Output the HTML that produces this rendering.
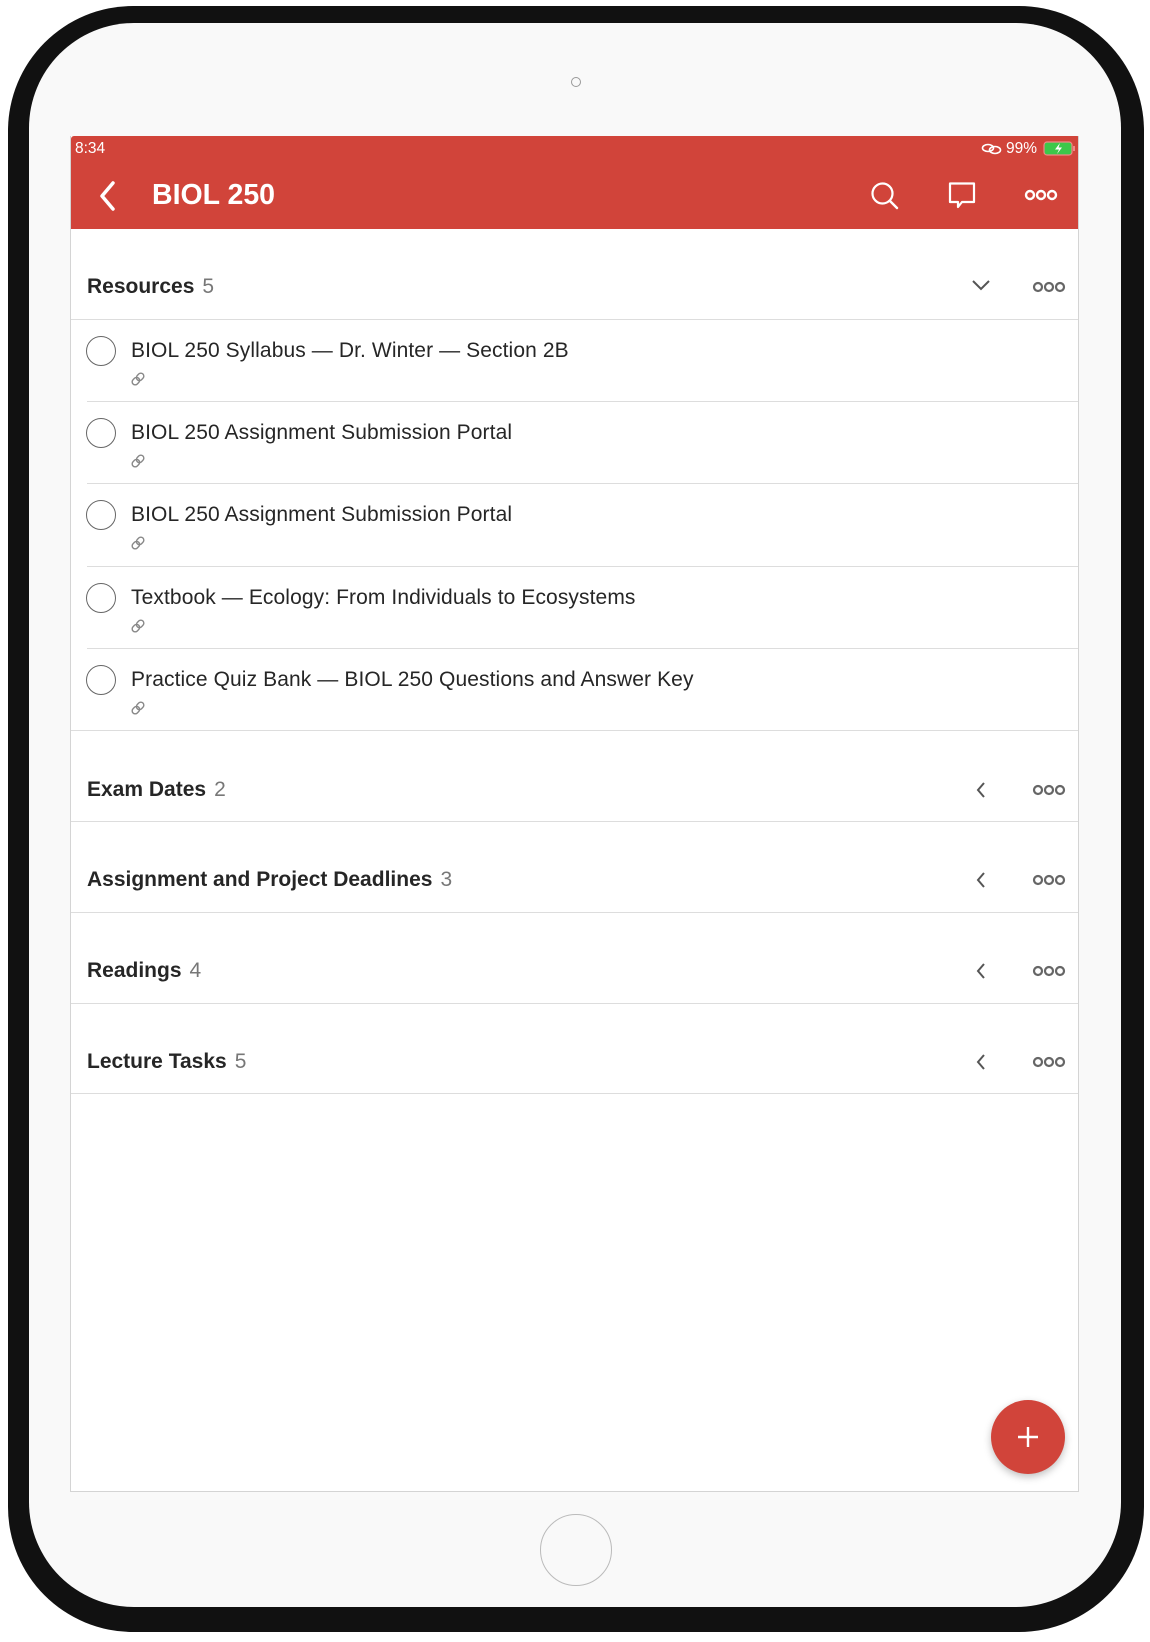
<!DOCTYPE html>
<html><head><meta charset="utf-8"><style>
*{margin:0;padding:0;box-sizing:border-box}
body{width:1150px;height:1642px;background:#fff;position:relative;overflow:hidden;font-family:"Liberation Sans",sans-serif}
.shadow{position:absolute;left:8px;top:6px;width:1136px;height:1626px;background:#111;border-radius:125px}
.dev{position:absolute;left:29px;top:23px;width:1092px;height:1584px;background:#f9f9f9;border-radius:105px}
.cam{position:absolute;left:571px;top:77px;width:10px;height:10px;border:1px solid #999;border-radius:50%}
.home{position:absolute;left:540px;top:1514px;width:72px;height:72px;border:1.5px solid #bbb;border-radius:50%}
.scr{position:absolute;left:70px;top:136px;width:1009px;height:1356px;background:#fff;border:1px solid #d4d4d4;border-top:none;overflow:hidden}
.hdr{position:absolute;left:0;top:0;width:1009px;height:93px;background:#d1443a;border-radius:3px 3px 0 0}
.t{position:absolute;white-space:nowrap}
.sec{position:absolute;left:16px;font-size:21px;font-weight:bold;color:#262626}
.sec span{font-weight:normal;color:#777;margin-left:8px}
.line{position:absolute;left:0;width:1009px;height:1px;background:#ddd}
.item{position:absolute;left:60px;font-size:21px;color:#262626;letter-spacing:0.1px}
.circ{position:absolute;left:15px;width:30px;height:30px;border:1.5px solid #666;border-radius:50%}
.fab{position:absolute;left:920px;top:1264px;width:74px;height:74px;border-radius:50%;background:#d1443a;box-shadow:0 3px 8px rgba(0,0,0,.25)}
</style></head><body>
<div class="shadow"></div>
<div class="dev"></div>
<div class="cam"></div>
<div class="home"></div>
<div class="scr">
 <div class="hdr">
  <div class="t" style="left:4px;top:4px;color:#fff;font-size:15.5px">8:34</div>
  <div class="t" style="left:935px;top:4px;color:#fff;font-size:15.5px">99%</div>
  <svg style="position:absolute;left:910px;top:6px" width="22" height="14" viewBox="0 0 22 14"><g fill="none" stroke="#fff" stroke-width="1.6"><ellipse cx="7" cy="6" rx="5.5" ry="3.5"/><ellipse cx="14" cy="8" rx="5.5" ry="3.5"/></g></svg>
  <svg style="position:absolute;left:972px;top:5px" width="34" height="16" viewBox="0 0 34 16"><rect x="1" y="1" width="28" height="13" rx="3" fill="#3cc84a" stroke="#e88" stroke-width="1.2"/><rect x="30" y="5" width="2" height="5" fill="#e88"/><path d="M17 2 L12 8.5 H16 L14 13 L19 6.5 H15.5Z" fill="#fff"/></svg>
  <svg style="position:absolute;left:26px;top:44px" width="22" height="32" viewBox="0 0 22 32"><path d="M16 3 L5 16 L16 29" fill="none" stroke="#fff" stroke-width="3.5" stroke-linecap="round" stroke-linejoin="round"/></svg>
  <div class="t" style="left:81px;top:43px;color:#fff;font-size:28.5px;font-weight:bold">BIOL 250</div>
  <svg style="position:absolute;left:799px;top:45px" width="30" height="30" viewBox="0 0 30 30"><circle cx="12.5" cy="12.5" r="10" fill="none" stroke="#fff" stroke-width="2.2"/><path d="M20 20 L27 27" stroke="#fff" stroke-width="2.4" stroke-linecap="round"/></svg>
  <svg style="position:absolute;left:876px;top:45px" width="30" height="30" viewBox="0 0 30 30"><path d="M3 2.5 H27 V21 H15 L11 26 V21 H3Z" fill="none" stroke="#fff" stroke-width="2.2" stroke-linejoin="round"/></svg>
  <svg style="position:absolute;left:953px;top:52px" width="34" height="14" viewBox="0 0 34 14"><g fill="none" stroke="#fff" stroke-width="2.4"><circle cx="6" cy="7" r="4"/><circle cx="17" cy="7" r="4"/><circle cx="28" cy="7" r="4"/></g></svg>
 </div>

 <div class="sec" style="top:139px">Resources<span>5</span></div>
 <svg style="position:absolute;left:900px;top:142px" width="20" height="14" viewBox="0 0 20 14"><path d="M2 3 L10 11 L18 3" fill="none" stroke="#555" stroke-width="2"/></svg>
 <div class="line" style="top:183px"></div>

 <div class="circ" style="top:200px"></div><div class="item t" style="top:203px">BIOL 250 Syllabus — Dr. Winter — Section 2B</div>
 <div class="line" style="top:265px;left:16px"></div>
 <div class="circ" style="top:282px"></div><div class="item t" style="top:285px">BIOL 250 Assignment Submission Portal</div>
 <div class="line" style="top:347px;left:16px"></div>
 <div class="circ" style="top:364px"></div><div class="item t" style="top:367px">BIOL 250 Assignment Submission Portal</div>
 <div class="line" style="top:430px;left:16px"></div>
 <div class="circ" style="top:447px"></div><div class="item t" style="top:450px">Textbook — Ecology: From Individuals to Ecosystems</div>
 <div class="line" style="top:512px;left:16px"></div>
 <div class="circ" style="top:529px"></div><div class="item t" style="top:532px">Practice Quiz Bank — BIOL 250 Questions and Answer Key</div>
 <div class="line" style="top:594px"></div>

 <div class="sec" style="top:642px">Exam Dates<span>2</span></div>
 <div class="line" style="top:685px"></div>
 <div class="sec" style="top:732px">Assignment and Project Deadlines<span>3</span></div>
 <div class="line" style="top:776px"></div>
 <div class="sec" style="top:823px">Readings<span>4</span></div>
 <div class="line" style="top:867px"></div>
 <div class="sec" style="top:914px">Lecture Tasks<span>5</span></div>
 <div class="line" style="top:957px"></div>

 <div class="fab"><svg style="position:absolute;left:25px;top:25px" width="24" height="24" viewBox="0 0 24 24"><path d="M12 2 V22 M2 12 H22" stroke="#fff" stroke-width="2.4"/></svg></div>
</div>
<svg width="1150" height="1642" style="position:absolute;left:0;top:0;pointer-events:none">
 <defs>
  <g id="lk"><g transform="rotate(-45 8 8)" fill="none" stroke="#888" stroke-width="1.4"><rect x="1" y="5" width="8" height="6" rx="3"/><rect x="7" y="5" width="8" height="6" rx="3"/></g></g>
  <g id="dt"><circle cx="5" cy="6" r="4" fill="none" stroke="#666" stroke-width="2.2"/><circle cx="16" cy="6" r="4" fill="none" stroke="#666" stroke-width="2.2"/><circle cx="27" cy="6" r="4" fill="none" stroke="#666" stroke-width="2.2"/></g>
  <g id="ch"><path d="M7 1 L1 8 L7 15" fill="none" stroke="#555" stroke-width="2"/></g>
 </defs>
 <use href="#lk" x="130" y="371"/><use href="#lk" x="130" y="453"/><use href="#lk" x="130" y="535"/><use href="#lk" x="130" y="618"/><use href="#lk" x="130" y="700"/>
 <use href="#dt" x="1033" y="281"/><use href="#dt" x="1033" y="784"/><use href="#dt" x="1033" y="874"/><use href="#dt" x="1033" y="965"/><use href="#dt" x="1033" y="1056"/>
 <use href="#ch" x="977" y="782"/><use href="#ch" x="977" y="872"/><use href="#ch" x="977" y="963"/><use href="#ch" x="977" y="1054"/>
</svg>
</body></html>
